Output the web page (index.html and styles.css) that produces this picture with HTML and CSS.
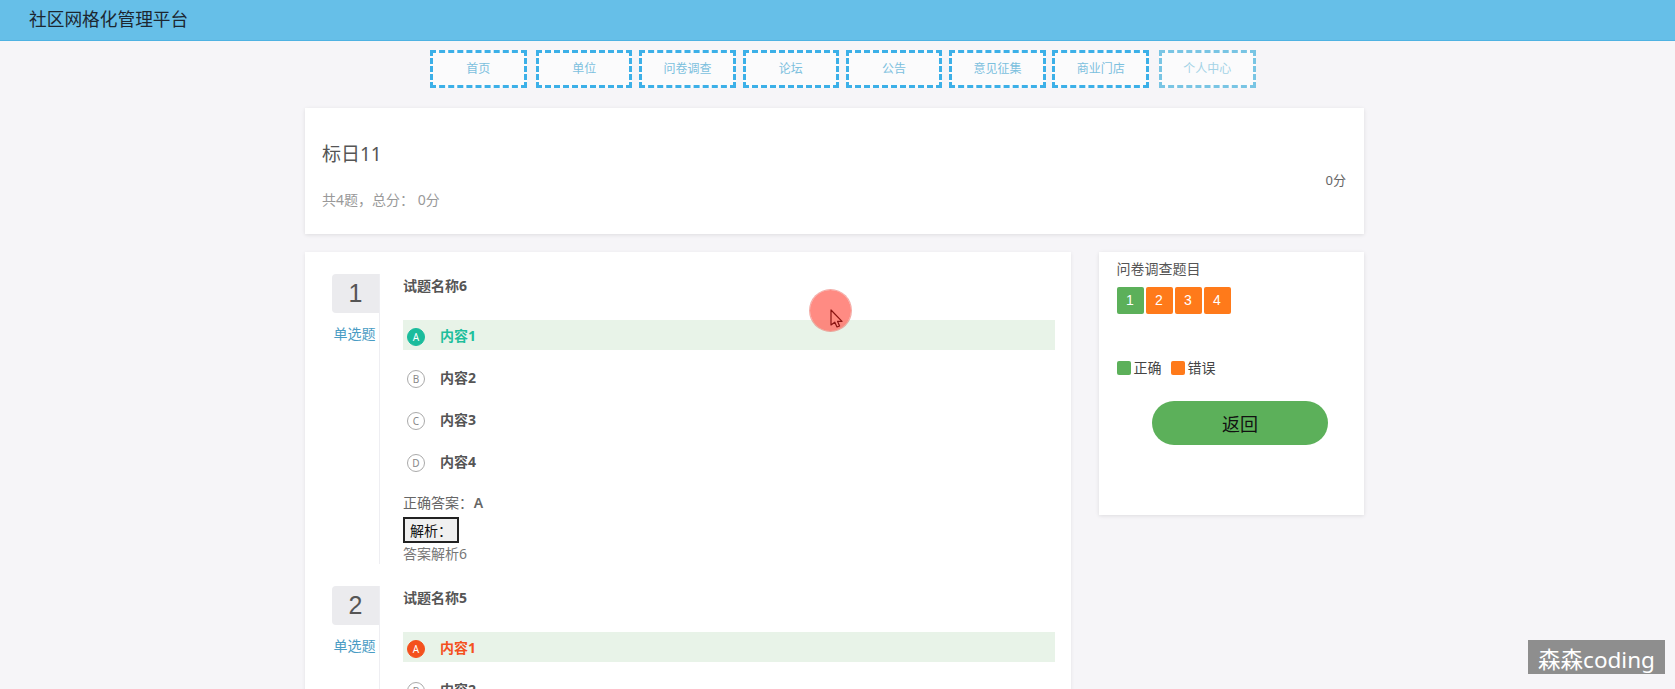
FILE: index.html
```html
<!DOCTYPE html>
<html lang="zh-CN">
<head>
<meta charset="utf-8">
<title>社区网格化管理平台</title>
<link rel="stylesheet" href="styles.css">
</head>
<body>
<header class="topbar"><span class="brand">社区网格化管理平台</span></header>
<nav class="nav">
  <a class="nav-item nav-item-first">首页</a>
  <a class="nav-item">单位</a>
  <a class="nav-item">问卷调查</a>
  <a class="nav-item">论坛</a>
  <a class="nav-item">公告</a>
  <a class="nav-item">意见征集</a>
  <a class="nav-item">商业门店</a>
  <a class="nav-item nav-item-fade">个人中心</a>
</nav>
<main class="page">
  <section class="summary">
    <div>
      <h1 class="summary-title">标日11</h1>
      <p class="summary-meta">共4题，总分： 0分</p>
    </div>
    <div class="summary-score">0分</div>
  </section>
  <div class="columns">
    <section class="questions">
      <article class="question">
        <div class="q-side">
          <div class="q-num">1</div>
          <div class="q-type">单选题</div>
        </div>
        <div class="q-body">
          <div class="q-title">试题名称6</div>
          <div class="option option-on option-right"><span class="mark">A</span><span class="opt-text">内容1</span></div>
          <div class="option"><span class="mark">B</span><span class="opt-text">内容2</span></div>
          <div class="option"><span class="mark">C</span><span class="opt-text">内容3</span></div>
          <div class="option"><span class="mark">D</span><span class="opt-text">内容4</span></div>
          <div class="answer">正确答案： <b class="answer-key">A</b></div>
          <button class="analysis">解析：</button>
          <div class="analysis-text">答案解析6</div>
        </div>
      </article>
      <article class="question">
        <div class="q-side">
          <div class="q-num">2</div>
          <div class="q-type">单选题</div>
        </div>
        <div class="q-body">
          <div class="q-title">试题名称5</div>
          <div class="option option-on option-wrong"><span class="mark">A</span><span class="opt-text">内容1</span></div>
          <div class="option"><span class="mark">B</span><span class="opt-text">内容2</span></div>
          <div class="option"><span class="mark">C</span><span class="opt-text">内容3</span></div>
          <div class="option"><span class="mark">D</span><span class="opt-text">内容4</span></div>
        </div>
      </article>
    </section>
    <aside class="sidecard">
      <div class="side-title">问卷调查题目</div>
      <div class="chips">
        <span class="chip chip-ok">1</span>
        <span class="chip chip-bad">2</span>
        <span class="chip chip-bad">3</span>
        <span class="chip chip-bad">4</span>
      </div>
      <div class="legend">
        <span class="swatch chip-ok"></span><span class="legend-label">正确</span>
        <span class="swatch chip-bad"></span><span class="legend-label">错误</span>
      </div>
      <button class="back">返回</button>
    </aside>
  </div>
</main>
<div class="click-dot">
  <svg class="pointer" width="16" height="22" viewBox="0 0 16 22"><path d="M1 1V16L4.800 13.200L7 18L9.600 17L7.600 12.400H12Z" fill="#ff8b80" stroke="#8a1512" stroke-width="1.200" stroke-linejoin="round"/></svg>
</div>
<div class="watermark">森森coding</div>
</body>
</html>
```

FILE: styles.css
```css
html, body {
  margin: 0;
  height: 100%;
  overflow: hidden;
}
body {
  background: #f6f5f8;
  color: #555;
  font-family: "Noto Sans", "Noto Sans CJK SC", sans-serif;
  font-size: 14px;
}
.topbar {
  box-sizing: border-box;
  height: 41px;
  background: #66bfe8;
  border-bottom: 1px solid #4fb2e2;
  padding-left: 29px;
  line-height: 39px;
}
.brand {
  font-size: 17.700px;
  color: #1d2730;
}
.nav {
  display: flex;
  gap: 6.800px;
  margin: 9px 0 0 430px;
}
.nav-item {
  box-sizing: border-box;
  width: 96.500px;
  height: 38px;
  border: 3px dashed #3cb0e8;
  background: #fbfbfc;
  color: #7cc0de;
  font-size: 12px;
  line-height: 32px;
  text-align: center;
}
.nav-item-first {
  margin-right: 2.700px;
}
.nav-item-fade {
  margin-left: 3.300px;
  border-color: #79c5e4;
  color: #a4d3e6;
}
.page {
  width: 1059px;
  margin: 20px 0 0 305px;
}
.summary {
  box-sizing: border-box;
  height: 126px;
  background: #fff;
  box-shadow: 0 1px 4px rgba(0, 0, 0, .1);
  display: flex;
  justify-content: space-between;
  padding: 32px 18px 0 17px;
}
.summary-title {
  margin: 0;
  font-size: 19px;
  font-weight: 400;
  line-height: 28px;
  color: #555;
}
.summary-meta {
  margin: 22px 0 0;
  font-size: 14px;
  line-height: 20px;
  color: #999;
}
.summary-score {
  margin-top: 30px;
  font-size: 13px;
  line-height: 20px;
  color: #666;
}
.columns {
  display: flex;
  align-items: flex-start;
  gap: 28px;
  margin-top: 18px;
}
.questions {
  box-sizing: border-box;
  width: 766px;
  height: 600px;
  padding: 22px 0 0 27px;
  background: #fff;
  box-shadow: 0 1px 4px rgba(0, 0, 0, .08);
}
.question {
  display: flex;
  margin-bottom: 21.500px;
}
.q-side {
  width: 47px;
  flex: none;
}
.q-num {
  height: 39px;
  background: #ebebee;
  border-radius: 4px 0 0 4px;
  color: #555;
  font-family: "Liberation Sans", sans-serif;
  font-size: 25px;
  line-height: 39px;
  text-align: center;
}
.q-type {
  margin-top: 11px;
  padding-right: 2px;
  font-size: 14px;
  line-height: 20px;
  color: #4a9cc4;
  text-align: center;
}
.q-body {
  box-sizing: border-box;
  width: 676px;
  border-left: 1px solid #eeeef2;
  padding-left: 23px;
}
.q-title {
  height: 26px;
  margin-bottom: 20px;
  font-size: 14px;
  font-weight: 700;
  line-height: 24px;
}
.option {
  display: flex;
  align-items: center;
  height: 30px;
  margin-bottom: 12px;
  font-size: 14px;
  font-weight: 700;
}
.mark {
  box-sizing: border-box;
  width: 18px;
  height: 18px;
  margin: 4px 15px 0 4px;
  border: 1px solid #aaa;
  border-radius: 50%;
  font-size: 10px;
  font-weight: 400;
  line-height: 16px;
  text-align: center;
  color: #888;
}
.option-on {
  background: #e8f3e8;
}
.option-right .mark {
  background: #1abc9c;
  border-color: #1abc9c;
  color: #fff;
}
.option-right .opt-text {
  color: #1fbf9c;
}
.option-wrong .mark {
  background: #f4511e;
  border-color: #f4511e;
  color: #fff;
}
.option-wrong .opt-text {
  color: #f4511e;
}
.answer {
  margin-top: 17px;
  font-size: 14px;
  line-height: 20px;
  color: #666;
}
.answer-key {
  margin-left: -3px;
  font-weight: 600;
}
.analysis {
  display: block;
  box-sizing: border-box;
  width: 56px;
  height: 26px;
  margin-top: 4px;
  padding: 0;
  background: #f0f0f0;
  border: 2px solid #222;
  color: #111;
  font-family: inherit;
  font-size: 14px;
}
.analysis-text {
  margin-top: 1px;
  font-size: 14px;
  line-height: 20px;
  color: #777;
}
.sidecard {
  box-sizing: border-box;
  width: 265px;
  height: 263px;
  padding: 7px 18px 0 17.500px;
  background: #fff;
  box-shadow: 0 1px 4px rgba(0, 0, 0, .1);
}
.side-title {
  font-size: 14px;
  line-height: 20px;
  color: #555;
}
.chips {
  display: flex;
  gap: 2px;
  margin-top: 8px;
}
.chip {
  width: 27px;
  height: 27px;
  border-radius: 2px;
  color: #fff;
  font-family: "Liberation Sans", sans-serif;
  font-size: 14px;
  line-height: 26px;
  text-align: center;
}
.chip-ok {
  background: #5cb05a;
}
.chip-bad {
  background: #ff7a1a;
}
.legend {
  display: flex;
  align-items: center;
  margin-top: 47px;
  font-size: 14px;
  line-height: 14px;
  color: #444;
}
.swatch {
  width: 14px;
  height: 14px;
  border-radius: 2px;
}
.legend-label {
  margin: 0 9px 0 3px;
}
.back {
  display: block;
  width: 176px;
  height: 44px;
  margin: 26px 0 0 35.500px;
  padding: 0;
  border: none;
  border-radius: 22px;
  background: #5cb05a;
  color: #111;
  font-family: inherit;
  font-size: 18px;
}
.click-dot {
  position: fixed;
  left: 810px;
  top: 290px;
  width: 41px;
  height: 41px;
  border-radius: 50%;
  background: rgba(255, 110, 100, .8);
  box-shadow: 0 0 0 1px rgba(230, 90, 80, .5);
}
.pointer {
  position: absolute;
  left: 20px;
  top: 19px;
}
.watermark {
  position: fixed;
  left: 1528px;
  top: 640px;
  width: 137px;
  height: 34px;
  background: #8e8e8e;
  color: #fff;
  font-size: 22.500px;
  line-height: 40px;
  text-align: center;
  overflow: hidden;
  white-space: nowrap;
}
```
